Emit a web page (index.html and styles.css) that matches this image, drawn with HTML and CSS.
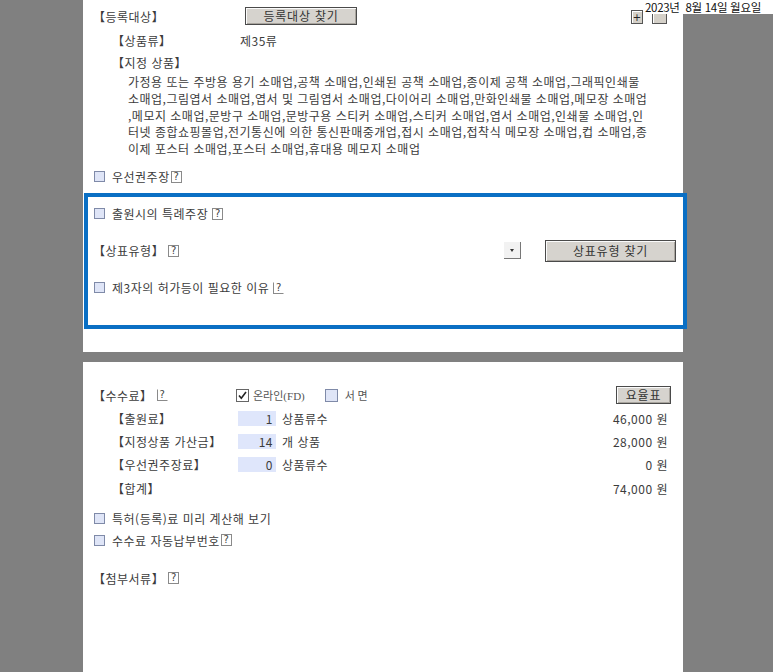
FILE: index.html
```html
<!DOCTYPE html>
<html lang="ko">
<head>
    <meta charset="UTF-8">
    <meta name="viewport" content="width=device-width, initial-scale=1.0">
    <title>상표등록출원서</title>
    <link rel="stylesheet" href="styles.css">
</head>
<body>
    <!-- 날짜 표시 / 확대 축소 -->
    <div class="date-box">2023년&nbsp; 8월 14일 월요일</div>
    <button class="zoom-btn zoom-in">+</button>
    <button class="zoom-btn zoom-out"></button>

    <div class="sheet sheet-top">
        <div class="row row-first">
            <span class="col-main">【등록대상】</span>
            <button class="btn btn-find">등록대상 찾기</button>
        </div>
        <div class="row row-sub">
            <span class="col-sub">【상품류】</span>
            <span>제35류</span>
        </div>
        <div class="row row-sub row-tight">
            <span>【지정 상품】</span>
        </div>
        <p class="goods">
            가정용 또는 주방용 용기 소매업,공책 소매업,인쇄된 공책 소매업,종이제 공책 소매업,그래픽인쇄물<br>
            소매업,그림엽서 소매업,엽서 및 그림엽서 소매업,다이어리 소매업,만화인쇄물 소매업,메모장 소매업<br>
            ,메모지 소매업,문방구 소매업,문방구용 스티커 소매업,스티커 소매업,엽서 소매업,인쇄물 소매업,인<br>
            터넷 종합쇼핑몰업,전기통신에 의한 통신판매중개업,접시 소매업,접착식 메모장 소매업,컵 소매업,종<br>
            이제 포스터 소매업,포스터 소매업,휴대용 메모지 소매업
        </p>

        <div class="row row-priority">
            <span class="check"></span>
            <span>우선권주장</span><span class="help">?</span>
        </div>

        <!-- 강조 영역 -->
        <div class="highlight">
            <div class="row">
                <span class="check"></span>
                <span>출원시의 특례주장</span><span class="help help-gap">?</span>
            </div>
            <div class="row row-type">
                <span>【상표유형】</span><span class="help help-gap">?</span>
                <span class="select-arrow"></span>
                <button class="btn btn-type">상표유형 찾기</button>
            </div>
            <div class="row row-third">
                <span class="check"></span>
                <span>제3자의 허가등이 필요한 이유</span><span class="help help-gap help-open">?</span>
            </div>
        </div>
    </div>

    <div class="sheet sheet-bottom">
        <div class="row row-fee-head">
            <span class="col-fee"><span>【수수료】</span><span class="help help-gap help-open">?</span></span>
            <span class="check checked"><svg width="11" height="11" viewBox="0 0 11 11"><path d="M2 5.5 L4.3 8.2 L9 2" fill="none" stroke="#222" stroke-width="1.6"/></svg></span>
            <span class="serif">온라인(FD)</span>
            <span class="check check-paper"></span>
            <span class="serif">서 면</span>
            <button class="btn btn-rate">요율표</button>
        </div>
        <div class="row fee-row">
            <span class="col-fee-sub">【출원료】</span>
            <span class="num-box">1</span>
            <span class="unit">상품류수</span>
            <span class="amount">46,000 원</span>
        </div>
        <div class="row fee-row">
            <span class="col-fee-sub">【지정상품 가산금】</span>
            <span class="num-box">14</span>
            <span class="unit">개 상품</span>
            <span class="amount">28,000 원</span>
        </div>
        <div class="row fee-row">
            <span class="col-fee-sub">【우선권주장료】</span>
            <span class="num-box">0</span>
            <span class="unit">상품류수</span>
            <span class="amount">0 원</span>
        </div>
        <div class="row fee-row fee-total">
            <span class="col-fee-sub">【합계】</span>
            <span class="amount">74,000 원</span>
        </div>

        <div class="row row-calc">
            <span class="check"></span>
            <span>특허(등록)료 미리 계산해 보기</span>
        </div>
        <div class="row row-auto">
            <span class="check"></span>
            <span>수수료 자동납부번호</span><span class="help">?</span>
        </div>
        <div class="row row-attach">
            <span>【첨부서류】</span><span class="help help-gap">?</span>
        </div>
    </div>
</body>
</html>
```

FILE: styles.css
```css
* {
    margin: 0;
    padding: 0;
    box-sizing: border-box;
}

body {
    background: #808080;
    font-family: "Noto Sans CJK KR", "Noto Sans", sans-serif;
    font-size: 12px;
    letter-spacing: 0.5px;
    color: #3c3c3c;
    overflow: hidden;
    height: 672px;
}

/* 상단 날짜 */
.date-box {
    position: absolute;
    top: 0;
    left: 643px;
    width: 130px;
    height: 14px;
    background: #fff;
    color: #111;
    font-size: 11.5px;
    letter-spacing: -0.3px;
    line-height: 14px;
    padding-left: 2px;
    white-space: nowrap;
    z-index: 3;
}

.zoom-btn {
    position: absolute;
    top: 10px;
    width: 12px;
    height: 14px;
    background: #d4d0c8;
    border: 1px solid #555;
    box-shadow: inset 1px 1px #fff;
    font-size: 10px;
    line-height: 11px;
    color: #222;
    font-family: "DejaVu Sans", sans-serif;
    z-index: 2;
}

.zoom-in {
    left: 631px;
}

.zoom-out {
    left: 652px;
    width: 15px;
}

/* 문서 영역 */
.sheet {
    width: 600px;
    margin-left: 83px;
    background: #fff;
    padding: 0 10px;
}

.sheet-top {
    height: 352px;
    padding-top: 6px;
}

.sheet-bottom {
    margin-top: 10px;
    height: 320px;
    padding-top: 23px;
}

.row {
    display: flex;
    align-items: center;
    height: 20px;
    white-space: nowrap;
}

.row-sub {
    padding-left: 19px;
    margin-top: 4px;
}

.row-tight {
    margin-top: 2px;
}

.col-main {
    width: 152px;
}

.col-sub {
    width: 128px;
}

.goods {
    padding-left: 35px;
    padding-top: 2px;
    line-height: 16.75px;
    white-space: nowrap;
}

.row-priority {
    margin-top: 9px;
}

.check {
    display: inline-block;
    width: 11px;
    height: 11px;
    border: 1px solid #7f8aa8;
    background: #dfe5f7;
    margin-left: 1px;
    margin-right: 7px;
    flex-shrink: 0;
}

.check.checked {
    width: 13px;
    height: 13px;
    background: #fff;
    border-color: #666;
    margin-left: 0;
    margin-right: 4px;
    display: flex;
    align-items: center;
    justify-content: center;
}

.help {
    display: inline-block;
    width: 11px;
    height: 12px;
    border: 1px solid #8a8a8a;
    font-size: 10px;
    line-height: 10px;
    letter-spacing: 0;
    text-align: center;
    color: #444;
    margin-left: 1px;
    font-family: "DejaVu Sans", sans-serif;
}

.help-gap {
    margin-left: 4px;
}

.help-open {
    border-top-color: transparent;
    border-right-color: transparent;
}

/* 파란 강조 박스 */
.highlight {
    margin: 6px -14px 0 -9px;
    border: 4px solid #0a6fc4;
    height: 136px;
    padding: 7px 7px 0 5px;
}

.row-type {
    height: 22px;
    margin-top: 16px;
}

.select-arrow {
    width: 17px;
    height: 17px;
    margin-left: auto;
    margin-right: 24px;
    background: #f2f2f2;
    border-right: 1px solid #777;
    border-bottom: 1px solid #777;
    position: relative;
}

.select-arrow::after {
    content: "";
    position: absolute;
    left: 6px;
    top: 7px;
    border-left: 2px solid transparent;
    border-right: 2px solid transparent;
    border-top: 3px solid #333;
}

.row-third {
    margin-top: 16px;
}

/* 버튼 */
.btn {
    font-family: "Noto Sans CJK KR", sans-serif;
    font-size: 12px;
    color: #333;
    background: #d6d3ce;
    border: 1px solid #4a4a4a;
    box-shadow: inset 1px 1px #fbfbfb, inset -1px -1px #a9a59e;
    letter-spacing: 0.8px;
}

.btn-find {
    width: 112px;
    height: 18px;
    line-height: 14px;
}

.btn-type {
    width: 131px;
    height: 22px;
}

.btn-rate {
    width: 55px;
    height: 18px;
    line-height: 14px;
    margin-left: auto;
    margin-right: 2px;
}

/* 수수료 */
.col-fee {
    width: 143px;
    display: flex;
    align-items: center;
}

.serif {
    font-family: "Liberation Serif", "Noto Sans CJK KR", serif;
    font-size: 11px;
    letter-spacing: 0;
    color: #555;
}

.check-paper {
    margin-left: 20px;
    width: 13px;
    height: 13px;
}

.fee-row {
    margin-top: 3px;
    padding-left: 19px;
}

.col-fee-sub {
    width: 126px;
}

.num-box {
    width: 38px;
    height: 15px;
    background: #dfe6fb;
    text-align: right;
    padding-right: 3px;
    line-height: 15px;
}

.unit {
    margin-left: 6px;
}

.amount {
    margin-left: auto;
    margin-right: 5px;
}

.fee-total {
    margin-top: 4px;
}

.row-calc {
    margin-top: 10px;
}

.row-auto {
    margin-top: 2px;
}

.row-attach {
    margin-top: 18px;
}
```
